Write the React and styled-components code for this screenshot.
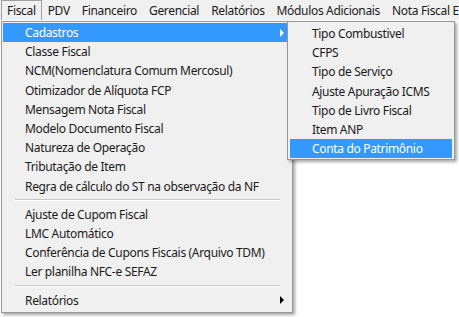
import React from "react";
import styled, { createGlobalStyle } from "styled-components";

const GlobalStyle = createGlobalStyle`
  html, body {
    margin: 0;
    padding: 0;
    background: #ffffff;
  }
  body {
    font-family: "Noto Sans", "Open Sans", sans-serif;
    font-size: 12px;
    letter-spacing: -0.33px;
  }
`;

const Screen = styled.div`
  position: relative;
  width: 459px;
  height: 317px;
  overflow: hidden;
  background: #ffffff;
`;

const MenuBar = styled.div`
  display: flex;
  height: 20px;
  padding-left: 1px;
  background: #f0f0f0;
`;

const BarItem = styled.div`
  display: flex;
  align-items: center;
  box-sizing: border-box;
  padding: 0 5px;
  border: 1px solid ${(p) => (p.$active ? "#a0a0a0" : "transparent")};
  border-bottom: none;
  color: #1a1a1a;
  white-space: nowrap;
`;

const Popup = styled.div`
  position: absolute;
  box-sizing: border-box;
  background: #f0f0f0;
  border: 1px solid #979797;
  box-shadow: 2px 2px 3px rgba(0, 0, 0, 0.35);
`;

const MainMenu = styled(Popup)`
  left: 1px;
  top: 21px;
  width: 292px;
  padding: 1px 1px 2px 1px;
`;

const SubMenu = styled(Popup)`
  left: 287px;
  top: 21px;
  width: 168px;
  padding: 2px 2px 1px 2px;
`;

const Item = styled.div`
  position: relative;
  display: flex;
  align-items: center;
  height: 19.2px;
  padding-left: 22px;
  color: ${(p) => (p.$hot ? "#ffffff" : "#1a1a1a")};
  background: ${(p) => (p.$hot ? "#3399ff" : "transparent")};
  white-space: nowrap;
`;

const Arrow = styled.span`
  position: absolute;
  right: 7px;
  top: 50%;
  margin-top: -4px;
  width: 0;
  height: 0;
  border-top: 4px solid transparent;
  border-bottom: 4px solid transparent;
  border-left: 4px solid ${(p) => (p.$light ? "#ffffff" : "#000000")};
`;

const Separator = styled.div`
  height: 9px;
  display: flex;
  align-items: center;
  padding: 0 11px 0 12px;

  &::after {
    content: "";
    flex: 1;
    height: 0;
    border-top: 1px solid #c5c5c5;
    border-bottom: 1px solid #ffffff;
  }
`;

const barItems = [
  "Fiscal",
  "PDV",
  "Financeiro",
  "Gerencial",
  "Relatórios",
  "Módulos Adicionais",
  "Nota Fiscal Eletrônica",
];

const groups = [
  [
    "Cadastros",
    "Classe Fiscal",
    "NCM(Nomenclatura Comum Mercosul)",
    "Otimizador de Alíquota FCP",
    "Mensagem Nota Fiscal",
    "Modelo Documento Fiscal",
    "Natureza de Operação",
    "Tributação de Item",
    "Regra de cálculo do ST na observação da NF",
  ],
  [
    "Ajuste de Cupom Fiscal",
    "LMC Automático",
    "Conferência de Cupons Fiscais (Arquivo TDM)",
    "Ler planilha NFC-e SEFAZ",
  ],
  ["Relatórios"],
];

const subItems = [
  "Tipo Combustivel",
  "CFPS",
  "Tipo de Serviço",
  "Ajuste Apuração ICMS",
  "Tipo de Livro Fiscal",
  "Item ANP",
  "Conta do Patrimônio",
];

const withArrow = ["Cadastros", "Relatórios"];

export default function App() {
  return (
    <Screen>
      <GlobalStyle />
      <MenuBar>
        {barItems.map((label, i) => (
          <BarItem key={label} $active={i === 0}>
            {label}
          </BarItem>
        ))}
      </MenuBar>

      <MainMenu>
        {groups.map((group, gi) => (
          <React.Fragment key={gi}>
            {gi > 0 && <Separator />}
            {group.map((label) => {
              const hot = label === "Cadastros";
              return (
                <Item key={label} $hot={hot}>
                  {label}
                  {withArrow.includes(label) && <Arrow $light={hot} />}
                </Item>
              );
            })}
          </React.Fragment>
        ))}
      </MainMenu>

      <SubMenu>
        {subItems.map((label, i) => (
          <Item key={label} $hot={i === subItems.length - 1}>
            {label}
          </Item>
        ))}
      </SubMenu>
    </Screen>
  );
}
